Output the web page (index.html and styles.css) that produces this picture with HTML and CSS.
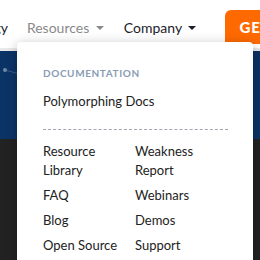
FILE: index.html
```html
<!DOCTYPE html>
<html>
  <head>
    <link rel="stylesheet" href="styles.css">
    <title>Resources</title>
  </head>
  <body>
    <div class="header">
      <div class="nav">
        <span class="navItem first">Technology</span>
        <span class="navItem muted">Resources <span class="caret"></span></span>
        <span class="navItem">Company <span class="caret"></span></span>
        <button type="button" class="ctaButton">GET STARTED</button>
      </div>
    </div>
    <div class="hero">
      <svg class="heroLines" width="40" height="30" viewBox="0 0 40 30">
        <line x1="5" y1="19" x2="30" y2="26" stroke="#5a7596" stroke-width="0.6"/>
        <circle cx="5" cy="19" r="2" fill="#6f88a6"/>
      </svg>
    </div>
    <div class="page"></div>

    <div class="dropdown">
      <div class="section">
        <div class="label">DOCUMENTATION</div>
        <a class="link">Polymorphing Docs</a>
      </div>
      <div class="divider"></div>
      <div class="grid">
        <a class="link">Resource<br>Library</a>
        <a class="link">Weakness<br>Report</a>
        <a class="link">FAQ</a>
        <a class="link">Webinars</a>
        <a class="link">Blog</a>
        <a class="link">Demos</a>
        <a class="link">Open Source</a>
        <a class="link">Support</a>
      </div>
    </div>
  </body>
</html>
```

FILE: styles.css
```css
body {
  margin: 0;
  width: 260px;
  height: 260px;
  overflow: hidden;
  position: relative;
  font-family: Lato, "Open Sans", sans-serif;
  background-color: #222222;
}

.header {
  height: 48px;
  background-color: white;
  border-bottom: 3px solid #e9e9e9;
  overflow: hidden;
}

.nav {
  display: flex;
  align-items: flex-start;
  margin-left: -62px;
  white-space: nowrap;
}

.navItem {
  font-size: 14px;
  color: #1c1c2a;
  padding-top: 19px;
  margin-right: 20px;
}

.navItem.first {
  margin-right: 19px;
}

.navItem.muted {
  color: #8a8a8a;
}

.caret {
  display: inline-block;
  width: 0;
  height: 0;
  margin-left: 3px;
  vertical-align: 3px;
  border-left: 4px solid transparent;
  border-right: 4px solid transparent;
  border-top: 4px solid currentColor;
}

.ctaButton {
  margin-left: 9px;
  margin-top: 10px;
  height: 34px;
  padding: 0 14px;
  border: none;
  border-radius: 6px 0 0 0;
  background-color: #ff6a00;
  color: white;
  font-family: Lato, sans-serif;
  font-weight: 900;
  font-size: 15px;
  letter-spacing: 1px;
  text-align: left;
}

.hero {
  height: 88px;
  background-color: #0b3466;
}

.heroLines {
  display: block;
}

.dropdown {
  position: absolute;
  top: 42px;
  left: 17px;
  width: 210px;
  height: 240px;
  padding: 0 0 0 26px;
  background-color: white;
  border-radius: 4px;
  box-shadow: 0 2px 12px rgba(0, 0, 0, 0.25);
}

.section {
  display: flex;
  flex-direction: column;
  padding-top: 24px;
}

.label {
  font-size: 10px;
  font-weight: 700;
  letter-spacing: 0.6px;
  color: #8a9bb3;
  line-height: 14px;
}

.link {
  font-size: 13px;
  line-height: 19px;
  color: #222222;
}

.section .link {
  margin-top: 12px;
}

.divider {
  margin-top: 18px;
  width: 185px;
  border-top: 1px dashed #a3a8b0;
}

.grid {
  display: grid;
  grid-template-columns: 92px 92px;
  row-gap: 6px;
  margin-top: 12px;
}
```
